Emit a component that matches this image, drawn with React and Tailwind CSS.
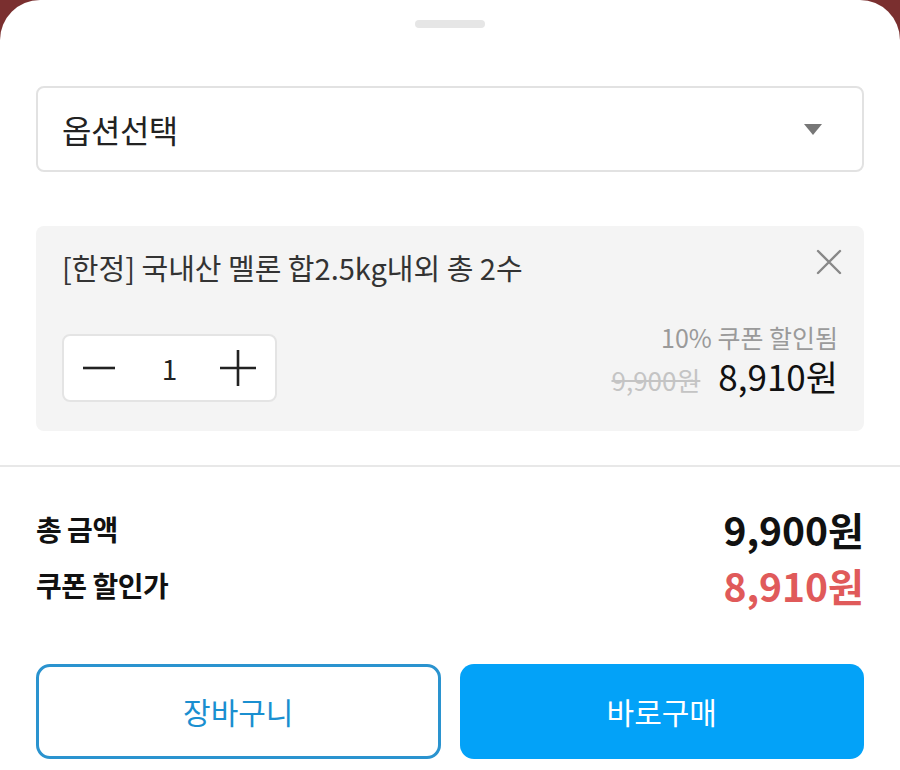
import React, { useState } from 'react';

const KR = { fontFamily: '"Noto Sans CJK KR", "Noto Sans", sans-serif' };

export default function App() {
  const [qty, setQty] = useState(1);

  return (
    <div className="w-[900px] h-[770px] bg-[#7a2f2f] overflow-hidden" style={KR}>
      <div className="h-full bg-white rounded-t-[40px] flex flex-col">
        {/* Handle */}
        <div className="flex justify-center pt-[20px]">
          <div className="w-[70px] h-[8px] rounded-full bg-[#e6e6e6]" />
        </div>

        {/* Option select */}
        <div className="px-[36px] mt-[58px]">
          <div className="h-[86px] border-2 border-[#e2e2e2] rounded-[8px] flex items-center justify-between pl-[24px] pr-[40px]">
            <span className="text-[32px] text-[#222] tracking-[-0.5px]">옵션선택</span>
            <svg width="18" height="11" viewBox="0 0 18 11">
              <path d="M0 0h18L9 11z" fill="#777" />
            </svg>
          </div>
        </div>

        {/* Selected item */}
        <div className="px-[36px] mt-[54px]">
          <div className="h-[205px] bg-[#f4f4f4] rounded-[8px] pl-[26px] pr-[26px] pt-[20px] flex flex-col">
            <div className="flex items-start justify-between">
              <span className="text-[29px] text-[#333] leading-[42px]">
                [한정] 국내산 멜론 합2.5kg내외 총 2수
              </span>
              <svg width="26" height="26" viewBox="0 0 26 26" className="mt-[3px] mr-[-4px]">
                <path d="M2 2L24 24M24 2L2 24" stroke="#888" strokeWidth="2.4" strokeLinecap="round" />
              </svg>
            </div>
            <div className="flex items-end justify-between mt-[32px]">
              <div className="w-[215px] h-[68px] bg-white border-2 border-[#e4e4e4] rounded-[8px] flex items-center justify-between px-[18px]">
                <button onClick={() => setQty(Math.max(1, qty - 1))}>
                  <svg width="34" height="34" viewBox="0 0 34 34">
                    <path d="M1 17H33" stroke="#222" strokeWidth="2.6" />
                  </svg>
                </button>
                <span className="text-[28px] text-[#222] ml-[4px]">{qty}</span>
                <button onClick={() => setQty(qty + 1)}>
                  <svg width="38" height="38" viewBox="0 0 38 38">
                    <path d="M1 19H37M19 1V37" stroke="#222" strokeWidth="2.6" />
                  </svg>
                </button>
              </div>
              <div className="flex flex-col items-end">
                <span className="text-[25px] text-[#9a9a9a] leading-[34px]">10% 쿠폰 할인됨</span>
                <div className="flex items-baseline gap-[18px] leading-[44px]">
                  <span className="text-[26px] text-[#c4c4c4] line-through">9,900원</span>
                  <span className="text-[35px] text-[#111]">8,910원</span>
                </div>
              </div>
            </div>
          </div>
        </div>

        {/* Divider */}
        <div className="h-[2px] bg-[#e8e8e8] mt-[34px]" />

        {/* Totals */}
        <div className="px-[36px] mt-[40px] flex flex-col gap-[12px]">
          <div className="flex items-center justify-between h-[44px]">
            <span className="text-[28px] font-bold text-[#111] tracking-[-0.5px]">총 금액</span>
            <span className="text-[39px] font-bold text-[#111]">9,900원</span>
          </div>
          <div className="flex items-center justify-between h-[44px]">
            <span className="text-[28px] font-bold text-[#111] tracking-[-0.5px]">쿠폰 할인가</span>
            <span className="text-[39px] font-bold text-[#e05a5a]">8,910원</span>
          </div>
        </div>

        {/* Buttons */}
        <div className="px-[36px] mt-[57px] grid grid-cols-2 gap-[19px]">
          <button className="h-[95px] border-[3px] border-[#2a93cf] rounded-[14px] text-[30px] text-[#1a8fd0] bg-white">
            장바구니
          </button>
          <button className="h-[95px] rounded-[14px] text-[30px] text-white bg-[#03a2f8]">
            바로구매
          </button>
        </div>
      </div>
    </div>
  );
}
